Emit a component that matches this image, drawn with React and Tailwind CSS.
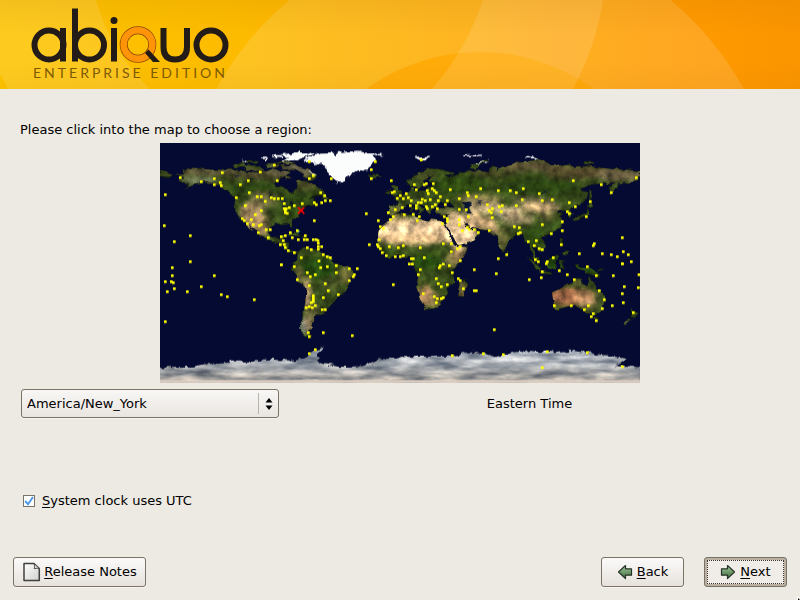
import React from "react";

// Outlines are longitude,latitude pairs; the map is a plain equirectangular one.
const toPoints = (s) =>
  s
    .trim()
    .split(/\s+/)
    .map((p) => {
      const [lon, lat] = p.split(",").map(Number);
      return (lon + 180) * 4 + "," + (90 - lat) * 4;
    })
    .join(" ");

const LAND = [
  // North America
  "-168,66 -162,66.5 -163,69 -156,71.3 -141,69.7 -128,70 -120,69.5 -115,68 -108,68 -100,68 -95,71 -90,69 -85,69 -82,68 -87,65 -93,62 -94.5,59 -92,57 -85,55.5 -82,53 -79,51.5 -79,55 -77,57 -78,60 -77,62.3 -70,61 -65,59 -62,57 -56,53 -58,51 -66,50 -70,47.5 -64,49 -65,46 -61,46 -66,43.7 -70,43.5 -70,41.7 -74,40.5 -76,37 -76,35 -81,32 -81,29 -80,26 -82,27 -83,29.5 -85,30 -90,29.3 -94,29.5 -97,28 -98,22 -96,19 -91,18.5 -90,21 -87,21.3 -88,16 -83,15 -84,11 -81,9 -77,8.5 -78,7 -81,7.5 -85,10 -88,13 -94,16 -97,15.8 -105,20 -106,23 -112,28.5 -114.5,31.5 -112,27 -110,23 -113,26 -117,32.5 -121,35 -124,40 -124,47 -123,49 -128,51 -131,55 -136,59 -145,60.5 -152,60 -155,58 -163,55 -158,58 -162,60 -166,62 -161,64",
  "-90,73 -80,73.5 -70,70.5 -62,66 -65,63 -70,62.5 -73,65 -73,68 -80,70 -88,70.5",
  "-117,73 -105,73 -102,69 -115,69.5",
  "-125,74 -117,75.5 -116,73 -123,71.5",
  "-95,76 -80,76.5 -80,74.5 -92,75",
  "-115,76.5 -106,76.5 -108,74.8 -115,75.2",
  "-101,74 -90,74 -92,72 -100,71.5",
  "-86,65.5 -81,64 -86,63",
  "-59,50.5 -56,51.5 -53,47 -59,47.7",
  "-85,22 -80,23 -74,20.3 -78,20.2",
  "-74,19.8 -69,19.3 -69,18.2 -74,18.2",
  // South America
  "-77,8 -72,12 -68,11 -62,10.5 -57,6 -51,4 -50,0 -44,-2.5 -39,-3 -35,-6 -35,-9 -39,-13 -39,-18 -41,-22 -48,-25.5 -49,-28.5 -54,-34 -58,-34 -57,-38 -62,-39 -65,-41 -64,-43 -67,-46 -66,-48 -69,-51 -68,-53 -65,-55 -70,-55.5 -75,-51 -75,-46 -73,-42 -73,-37 -71,-30 -70,-19 -76,-14 -79,-8 -81,-5 -80,-2 -80,1 -77,4",
  // Africa
  "-6,35.8 10,37.2 11,34 20,31 23,32.7 32,31 34,28 37,21 39,16 43,12 51,12 48,5 42,-2 39,-6 40.5,-11 40.5,-15 35,-20 35,-24 32.5,-27 30,-31 26,-34 19,-34.7 18,-32 15,-27 12,-18 13.5,-12 12,-5 9,-1 9.5,4 5,4.5 1,6 -8,4.5 -13,8 -17,13 -16.5,20 -16,24 -13,28 -9.5,31",
  "49.3,-12 50.3,-16 47,-25 44,-25 43.5,-21 44.5,-16",
  // Europe and Asia
  "-9,43.5 -1.5,43.5 -1,46 -4.5,48.5 1,50 4,52 8,54 8,57 10.5,57.7 10.5,55 11,54 19,54.5 21,57 24,57.5 23.5,59.3 30,60 22,60.3 21.5,63 25,65.5 22,66 17,62 19,60 16.5,57 14,55.5 11.5,59 8,58 5,59.5 5,62 12,66 18,69.5 25,71 31,70 41,67.5 40,66 33,66.5 37,64 40,65 44,66.5 44,68.5 54,68.5 60,69.5 68,68.5 67,71 70,73 73,71 72,68 76,72 80,73 87,75 98,76.5 104,77.7 113,74 127,73.5 130,71 140,72.5 150,71.5 160,70 170,70 180,69 180,65 177,64.5 179,62.5 170,60 163,60 163,57 160,53 157,51 156,57 163,61.5 155,59.5 143,59.3 135,54.7 141,53 140,48 135,43.5 130,42.5 127.5,39.5 129.5,36 126.5,34.5 126,37.5 125,39.7 121.5,39 122,40.7 118,39 119,37.5 122.5,37 119.5,35 122,31 121,28 117,23.5 110,21 106,20.5 106,18 109,14 109,11.5 105,8.7 101,13 99.5,12 100.5,8 104,2 101,3 98.5,8 98,16 94,16 92,22 88,21.8 82,17 80,13 78,8 76,10 73,17 72.5,21 70,21 67,24.7 61,25 57,26.5 54,26.5 50,30 48,30 51,25.5 54,24 56.5,26 57,24 60,22.5 55,17 45,12.7 43,14 39,21 35,28 35,32 36,36.5 30,36.2 27,37 26.5,40 30,41.2 36,41.5 41.5,41.5 38,45 35,46.5 36.5,45.2 33.5,44.5 31,46.5 28.5,44 28,41.5 23.5,40.5 24,38 22.5,36.5 19.5,40.5 19.5,42 14,45 13,45.5 12.5,44 18.5,40 16,38 12,42 9,44.4 4,43.5 3,42 0,39 -2,36.8 -5.5,36 -9,37",
  "-5.5,50 1.3,51.2 1.5,53 -2,55.5 -2,57.5 -3,58.6 -6,57.5 -4.5,54.8 -3,53.5 -5,52",
  "-10,52 -6.2,52.3 -6,55 -10,54",
  "-24,65.5 -16,66.3 -14,65 -19,63.5 -22.5,64",
  "130,31.5 131,34 136,35.5 139,38 141,41 141.8,39 140.5,35.5 136,34",
  "140,42 142,45.5 145,43.5 142,42.3",
  "142,54 143.5,54 143.5,49 142,46",
  "52,71 57,70.7 60,74 68,76.8 60,76 54,73",
  "137,76 146,75.5 142,73.5 138,74.5",
  "-180,69 -170,66 -175,64.5 -180,65",
  "80,9.7 82,7 80.5,6",
  "95,5.5 104,-2 106,-6 102,-4.5 98,1",
  "105,-6.2 114.5,-7.2 114,-8.7 106,-7.6",
  "109,1.5 113,3 117,7 119,5 117.5,1 116,-4 110.5,-3",
  "119.5,1 125,1.7 120.5,.3 123,-4.5 121,-3 119.5,-5.5",
  "120,18.5 122,18.5 122,14 124,12.5 120,14",
  "122,8 126,9.5 126,6 124,6",
  "120,25 122,25 121,22",
  "8.5,42 9.5,42 9.5,39 8.5,39",
  "12.5,38.2 15.5,38.2 15,36.8",
  "131,-.8 134,-1 135,-3.3 141,-2.6 146,-6 150.5,-10.5 146,-9 143,-9 138,-8 138,-5.5 133,-4",
  "148,-5.5 152,-4 151,-6",
  // Australia and New Zealand
  "114,-22 119,-20 124,-16.5 129,-15 132,-11.5 136.5,-12 135.5,-15 140.5,-17.5 142.5,-10.8 145.5,-15 149,-20.5 153,-25.5 153.5,-29 150,-37 146.5,-39 143.5,-38.7 138.5,-35.5 136,-34.7 131,-31.5 124,-33 118,-35 115,-34 115.5,-31.5",
  "144.5,-40.8 148.3,-40.8 147,-43.6",
  "173,-34.5 178.5,-37.8 175,-41.5 174,-39",
  "172.5,-40.7 174,-41.7 168,-46.5 166.5,-46",
].map(toPoints);

const ICE = [
  "-73,78 -66,80 -60,82 -45,82.5 -32,83.5 -20,82 -12,81.5 -20,80 -18,77 -20,74 -23,72 -25,70 -33,68 -40,65 -43,60 -48,61 -52,65 -54,69 -55,71 -60,75.5 -68,76",
  "-90,81.5 -75,83 -62,82.5 -70,80 -78,76.5 -88,77 -84,79",
  "-96,81 -90,81 -88,78.5 -95,79.3",
  "-104,79 -98,79 -99,77.8 -104,78",
  "-120,77 -114,77.6 -116,76.2",
  "11,79.7 22,80.3 20,78 16,77",
  "47,80.8 62,81.3 58,80 48,80",
  "94,80 100,80.5 104,78.8 96,79",
  "54,74 60,76.5 68,77 60,75.5",
].map(toPoints);

const ANTARCTICA = toPoints(
  "-180,-78.2 -155,-77.8 -148,-76 -126,-73.8 -104,-74 -102,-72.3 -80,-73 -70,-70 -62,-65 -57,-63.2 -61,-67 -61,-74 -60,-75 -45,-78 -28,-77.3 -10,-71 5,-70.5 40,-70 52,-66.8 62,-68 73,-70.3 86,-67 98,-65.2 115,-66.8 128,-65.5 140,-67.3 160,-70 170,-72 162,-76.5 180,-78.3 190,-79 190,-95 -190,-95 -190,-78.2"
);

const LAKES = [
  "-92,46.7 -88,48.5 -84.5,46.7 -88,46.8",
  "-88,42 -87,45 -85,45.5 -86.5,42",
  "-84,46 -80,45 -82,43.3",
  "-83,42 -79,43 -80,42",
  "-98,53.5 -96,51 -98,51",
  "-117,62 -110,62.8 -114,61",
  "-124,66.5 -119,66 -122,65",
  "47,45 52,47 53,44.5 51,41 54,37 50,37.3 49,41",
  "58,46 61,46 60,44",
  "32,0.3 34,0.3 33.5,-2.5 32,-2",
  "104,51.7 109,54.5 109.5,54 105,51.2",
].map(toPoints);

// Soft terrain patches: lon, lat, half width, half height, colour, opacity
const TERRAIN = [
  [-150, 69, 28, 4, "#5c5338", 0.9],
  [-150, 61, 14, 1.5, "#b9b4a4", 0.7],
  [-100, 67, 35, 4, "#554e31", 0.9],
  [-80, 71, 20, 5, "#655c48", 0.9],
  [-72, 59, 12, 4, "#463f22", 0.7],
  [-111, 36, 9, 10, "#a58760", 0.9],
  [-103, 47, 10, 6, "#83764c", 0.7],
  [-104, 28, 5, 9, "#a5875c", 0.9],
  [-112, 29, 3, 6, "#b59168", 0.8],
  [-90, 35, 9, 6, "#3e5220", 0.6],
  [-70, -24, 2.5, 13, "#c09a72", 1],
  [-76, -10, 2, 7, "#8c7848", 0.8],
  [-41, -9, 5, 7, "#6b6434", 0.8],
  [-52, -16, 7, 5, "#5b6630", 0.7],
  [-66, -36, 5, 6, "#6d6a3d", 0.9],
  [-69, -46, 4, 6, "#91795a", 0.9],
  [-73.5, -48, 1.5, 5, "#d3d5d2", 0.9],
  [5, 25, 32, 9, "#e9c696", 1],
  [22, 25, 18, 9, "#f0cc9d", 1],
  [-5, 24, 13, 9, "#efcd9d", 1],
  [10, 18, 27, 4, "#ecc28d", 1],
  [-3, 33, 9, 2, "#a68a5b", 0.9],
  [44, 7, 5, 6, "#b28c62", 0.9],
  [39, 2, 5, 5, "#8f7a4b", 0.8],
  [19, -25, 6, 8, "#b98c62", 1],
  [25, -28, 7, 5, "#967b4c", 0.7],
  [16, -16, 5, 4, "#586028", 0.6],
  [47, -22, 3, 8, "#826645", 0.8],
  [46, 24, 13, 13, "#edcb9d", 1],
  [40, 33, 5, 5, "#d9b78a", 1],
  [34, 39, 9, 2, "#7c7347", 0.9],
  [-4, 40, 5, 3, "#857a4a", 0.8],
  [13, 46.5, 5, 1, "#b1aa98", 0.5],
  [54, 32, 8, 6, "#c3a377", 1],
  [64, 30, 7, 5, "#bd9b70", 1],
  [62, 42, 14, 5, "#cbb183", 1],
  [60, 48, 16, 3, "#8e7f50", 0.9],
  [70, 26, 4, 4, "#c7a377", 0.9],
  [77, 18, 5, 8, "#7a7240", 0.7],
  [77, 35, 7, 2, "#c3baa8", 0.7],
  [83, 39, 9, 3, "#f0d0a0", 1],
  [88, 33, 13, 4, "#a39169", 1],
  [105, 42, 15, 4, "#c9a878", 1],
  [95, 47, 12, 2, "#8f805b", 0.8],
  [110, 35, 6, 3, "#7a6e41", 0.7],
  [18, 66, 9, 3, "#4d4a2a", 0.6],
  [100, 73, 24, 4, "#5d5335", 1],
  [140, 68, 32, 5, "#544b2c", 1],
  [165, 66, 18, 5, "#6e6046", 0.9],
  [70, 68, 18, 3, "#4c4a28", 0.8],
  [125, -25, 14, 7, "#9b6544", 1],
  [138, -26, 8, 6, "#b3825a", 1],
  [141, -30, 5, 3, "#bb9068", 0.9],
  [134, -14, 6, 2, "#6c6338", 0.7],
  [150, -26, 3, 9, "#4b552a", 0.8],
  [145, -37, 6, 2, "#404e25", 0.8],
  [169, -44, 3, 2, "#8f8b7a", 0.8],
];

const FOREST = [
  [-62, -4, 13, 8, "#1f450a", 0.85],
  [20, 1, 12, 5, "#264d0b", 0.85],
  [-8, 8, 8, 2, "#33520f", 0.8],
  [100, 20, 8, 8, "#26470d", 0.7],
  [112, 28, 9, 4, "#36521a", 0.7],
  [113, 0, 9, 6, "#224a0c", 0.8],
  [140, -5, 12, 4, "#224a0c", 0.8],
  [105, 57, 30, 6, "#243e0f", 0.8],
  [45, 58, 22, 7, "#2c4713", 0.8],
  [-110, 56, 20, 4, "#26400f", 0.8],
  [-75, 48, 14, 4, "#24400f", 0.8],
  [-83, 38, 7, 6, "#2c4c12", 0.8],
];

// City markers, measured on six 480-unit wide tiles of the map.
const CITIES = [
  [0, 0, "16,164 61,113 124,125 163,116 163,134 187,98 181,128 184,137 241,134 265,122 301,96 343,75 352,122 448,65 460,107 448,116 268,158 229,173 256,197 292,170 304,170 316,184 334,173 343,176 355,176 367,176 373,191 388,203 403,197 427,191 463,188 469,194 463,242 304,212 286,224 274,239 247,236 253,242 262,251 280,254 298,257 304,254 295,278 319,269 331,269 325,293 373,206 376,212 376,218 382,220 379,206 412,272 391,278 376,287 364,290 370,302 361,314 373,314 376,323 385,332 403,338 397,293 415,299 433,299 436,287 442,299 460,299 469,299 474,302 475,310 475,320 475,328 442,323 454,329 424,353 364,374 13,257 43,305 91,287 91,365"],
  [480, 0, "166,65 154,89 154,116 34,116 2,158 14,167 5,188 16,182 31,182 139,221 5,320 10,344 22,350 31,353 175,242 181,260 190,265 148,314 178,299 172,314 175,320 181,326 187,338 208,320 235,323 250,317 301,323 199,347 226,350 241,350 250,347 313,353 274,356 280,356 268,372 277,372 370,372 370,311 394,311 394,335 412,326 421,320 421,362 214,122 304,60 283,134 313,134 319,131 340,131 289,149 322,152 325,161 337,146 343,152 349,158 361,170 391,149 217,158 223,155 241,167 259,161 265,173 250,176 232,175 247,203 226,209 205,218 220,230 211,239 253,224 280,223 292,242 298,230 274,182 295,188 304,188 307,178 316,182 331,179 271,197 289,205 289,197 319,200 322,206 337,200 346,194 355,182 376,194 382,182 352,206 373,230 382,236 382,244 367,251 418,176 442,158 445,167 469,170 418,208 439,209 445,230 418,239 418,254 427,272 442,262 448,268 463,269 475,278"],
  [960, 0, "2,146 55,152 91,152 109,158 130,146 178,161 127,179 187,182 217,179 280,122 364,134 394,158 469,113 331,185 268,188 286,200 262,215 268,221 319,230 22,194 28,212 37,206 34,218 37,233 58,200 67,197 64,215 109,197 28,272 103,260 118,263 115,281 121,278 187,254 247,245 247,272 214,281 244,314 145,305 169,302 163,317 178,326 187,329 80,344 55,356 166,359 175,365 220,353 202,365 199,371 298,341 343,311 340,317 367,341 394,344 412,350 430,335 445,344 427,293 454,365 427,371"],
  [0, 360, "37,23 37,47 16,65 34,65 40,68 43,86 22,95 82,95 124,80 163,47 184,104 202,110 283,119 16,185 364,14 403,20 412,59 442,38 451,50 466,44 448,77 460,107 460,113 460,119 460,125 454,128 439,143 448,140 457,143 466,137 445,218 448,230 466,269 448,281 477,3"],
  [480, 360, "2,23 22,20 49,17 49,38 88,26 112,26 103,44 100,50 88,62 16,71 25,92 55,104 10,113 7,149 16,149 10,218 97,227 220,74 301,29 295,44 361,17 358,23 388,17 397,38 349,56 355,71 364,80 382,74 415,56 421,62 430,86 310,101 343,110 352,116 364,116 370,113 349,128 463,29 463,92 469,92 397,287"],
  [960, 360, "49,41 148,59 187,35 184,53 238,32 262,44 322,20 349,47 400,47 427,11 477,44 475,83 433,80 427,101 430,128 397,137 358,92 373,119 367,146 340,161 334,170 349,182 313,149 325,137 283,59 274,137 223,137 460,158 43,209 10,281 70,284 202,275 187,323 322,278 427,320"],
].flatMap(([dx, dy, s]) =>
  s.split(" ").map((p) => {
    const [x, y] = p.split(",").map(Number);
    return [x + dx, y + dy - 9];
  })
);

function Patches({ items }) {
  return items.map(([lon, lat, rx, ry, fill, opacity], i) => (
    <ellipse key={i} cx={(lon + 180) * 4} cy={(90 - lat) * 4} rx={rx * 4} ry={ry * 4} fill={fill} opacity={opacity} />
  ));
}

function WorldMap() {
  return (
    <svg viewBox="0 0 1440 720" className="mx-auto block w-[480px] max-w-full cursor-crosshair" role="img" aria-label="Time zone map">
      <defs>
        <filter id="relief" x="0" y="0" width="1440" height="720" filterUnits="userSpaceOnUse" colorInterpolationFilters="sRGB">
          <feTurbulence type="fractalNoise" baseFrequency="0.05" numOctaves="3" seed="4" result="coast" />
          <feDisplacementMap in="SourceGraphic" in2="coast" scale="14" xChannelSelector="R" yChannelSelector="G" result="land" />
          <feTurbulence type="fractalNoise" baseFrequency="0.035" numOctaves="5" seed="9" />
          <feColorMatrix values="1.3 0 0 0 -.15  1.3 0 0 0 -.15  1.3 0 0 0 -.15  0 0 0 0 1" result="grain" />
          <feComposite in="land" in2="grain" operator="arithmetic" k1="0.9" k2="0.57" k3="0" k4="0" />
        </filter>
        <filter id="snow" x="0" y="0" width="1440" height="720" filterUnits="userSpaceOnUse" colorInterpolationFilters="sRGB">
          <feTurbulence type="fractalNoise" baseFrequency="0.06" numOctaves="3" seed="4" result="coast" />
          <feDisplacementMap in="SourceGraphic" in2="coast" scale="20" xChannelSelector="R" yChannelSelector="G" />
        </filter>
        <filter id="ice" x="0" y="0" width="1440" height="720" filterUnits="userSpaceOnUse" colorInterpolationFilters="sRGB">
          <feTurbulence type="fractalNoise" baseFrequency="0.06" numOctaves="3" seed="7" result="coast" />
          <feDisplacementMap in="SourceGraphic" in2="coast" scale="20" xChannelSelector="R" yChannelSelector="G" result="land" />
          <feTurbulence type="fractalNoise" baseFrequency="0.01 0.05" numOctaves="5" seed="3" />
          <feColorMatrix values="1.6 0 0 0 -.32  1.45 0 0 0 -.23  1.25 0 0 0 -.1  0 0 0 0 1" result="grain" />
          <feComposite in="land" in2="grain" operator="arithmetic" k1="0.85" k2="0.56" k3="0" k4="0" />
        </filter>
        <filter id="soft" x="-20%" y="-20%" width="140%" height="140%">
          <feGaussianBlur stdDeviation="8" />
        </filter>
        <clipPath id="continents">
          {LAND.map((p, i) => (
            <polygon key={i} points={p} />
          ))}
        </clipPath>
        <linearGradient id="polar" x1="0" y1="0" x2="0" y2="1">
          <stop offset="0" stopColor="#c4c8ce" />
          <stop offset="0.45" stopColor="#a3a6a8" />
          <stop offset="0.75" stopColor="#aca69d" />
          <stop offset="0.85" stopColor="#cfc2b7" />
        </linearGradient>
      </defs>
      <rect width="1440" height="720" fill="#050a32" />
      <g filter="url(#relief)">
        <g clipPath="url(#continents)">
          <rect width="1440" height="720" fill="#37491b" />
          <g filter="url(#soft)">
            <Patches items={FOREST} />
            <Patches items={TERRAIN} />
          </g>
          {LAKES.map((p, i) => (
            <polygon key={i} points={p} fill="#0a1838" />
          ))}
        </g>
      </g>
      <polygon points={ANTARCTICA} fill="url(#polar)" filter="url(#ice)" />
      <g filter="url(#snow)">
        {ICE.map((p, i) => (
          <polygon key={i} points={p} fill="#fbfcfc" />
        ))}
        <path d="M455 50 L475 60 L462 70 Z M470 96 L440 86 L452 82 Z" fill="#d9dde2" />
      </g>
      <path d="M0 711 H1440 V720 H0 Z" fill="#d8cbc0" />
      <path d="M407 256 l14 8 l-8 8 z" fill="#178aa0" />
      {CITIES.map(([x, y], i) => (
        <rect key={i} x={x - 4} y={y - 4} width="8" height="8" fill="#ffff00" />
      ))}
      <path d="M414 193 L433 212 M433 193 L414 212" stroke="#ff0000" strokeWidth="5" />
    </svg>
  );
}

function Banner() {
  return (
    <header className="relative h-[89px] w-full overflow-hidden bg-[#ffa000]">
      <svg viewBox="0 0 800 89" preserveAspectRatio="none" className="block h-full w-full" aria-hidden="true">
        <defs>
          <linearGradient id="sun" x1="0" x2="1" y1="0" y2="0">
            <stop offset="0" stopColor="#fdc400" />
            <stop offset="0.3" stopColor="#fdbb00" />
            <stop offset="0.6" stopColor="#fea900" />
            <stop offset="0.85" stopColor="#ff9a00" />
            <stop offset="1" stopColor="#fb9500" />
          </linearGradient>
          <linearGradient id="shade" x1="0" x2="0" y1="0" y2="1">
            <stop offset="0" stopColor="#a06000" stopOpacity="0.1" />
            <stop offset="0.4" stopColor="#a06000" stopOpacity="0" />
            <stop offset="0.7" stopColor="#a06000" stopOpacity="0" />
            <stop offset="1" stopColor="#a06000" stopOpacity="0.06" />
          </linearGradient>
        </defs>
        <rect width="800" height="89" fill="url(#sun)" />
        <path d="M0 0 H96 Q110 50 150 89 H8 Q4 80 0 74 Z" fill="#fff" fillOpacity="0.12" />
        <circle cx="480" cy="232" r="300" fill="#fff" fillOpacity="0.13" />
        <circle cx="480" cy="245" r="193" fill="#ffa600" fillOpacity="0.7" />
        <path d="M483 0 H603 Q596 46 573 89 H432 Q466 50 483 0 Z" fill="#fff" fillOpacity="0.12" />
        <rect width="800" height="89" fill="url(#shade)" />
      </svg>
      <div className="absolute top-0 left-0 h-[89px] w-[240px]">
        <svg viewBox="0 0 240 89" className="block h-[89px] w-[240px]" role="img" aria-label="abiquo">
          <g fill="none" stroke="#231b17" strokeWidth="6">
            <circle cx="49" cy="45" r="14.5" />
            <circle cx="89.5" cy="45" r="14.5" />
            <circle cx="211" cy="45" r="14.5" />
            <line x1="63" y1="28" x2="63" y2="61.5" />
            <line x1="75" y1="8.5" x2="75" y2="61.5" />
            <line x1="114" y1="28" x2="114" y2="61.5" />
            <path d="M163.500 28 V47 Q163.500 59.500 175 59.500 Q187 59.500 187 47 V28" />
          </g>
          <circle cx="114" cy="20.5" r="3.500" fill="#231b17" />
          <circle cx="138" cy="44.5" r="14.300" fill="none" stroke="#8a4a05" strokeWidth="8" />
          <circle cx="138" cy="44.5" r="14.300" fill="none" stroke="#ff9408" strokeWidth="6.600" />
          <path d="M145 53 L148.500 49.500 L160 62 H153 Z" fill="#231b17" />
        </svg>
        <span className="absolute top-[64px] left-[33px] font-['Lato'] text-[14px] leading-[18px] tracking-[3px] whitespace-nowrap text-[#7d5a04]">
          ENTERPRISE EDITION
        </span>
      </div>
    </header>
  );
}

const buttonLook =
  "flex h-[30px] items-center justify-center rounded-[3px] border border-[#7b7367] bg-linear-to-b from-[#fbfaf9] via-[#f1eeeb] to-[#e6e1da] text-black shadow-[0_1px_0_#f7f5f1]";

function Arrow({ flip }) {
  return (
    <svg viewBox="0 0 16 16" className={flip ? "h-4 w-4 -scale-x-100" : "h-4 w-4"} aria-hidden="true">
      <defs>
        <linearGradient id={flip ? "leafL" : "leafR"} x1="0" x2="0" y1="0" y2="1">
          <stop offset="0" stopColor="#b4cfae" />
          <stop offset="0.5" stopColor="#709a6b" />
          <stop offset="1" stopColor="#3f6c3d" />
        </linearGradient>
      </defs>
      <path d="M1.500 4.800 H7.500 V1.500 L14.500 8 L7.500 14.500 V11.200 H1.500 Z" fill={flip ? "url(#leafL)" : "url(#leafR)"} stroke="#263427" strokeWidth="1.200" strokeLinejoin="round" />
    </svg>
  );
}

export default function App() {
  return (
    <div className="relative flex min-h-screen flex-col overflow-hidden bg-[#edeae3] font-['DejaVu_Sans',sans-serif] text-[13px] leading-5 text-black">
      <Banner />
      <main className="px-5 pt-[31px]">
        <p className="mb-[3px]">Please click into the map to choose a region:</p>
        <WorldMap />
        <div className="mt-1.5 flex items-center">
          <div className="relative ml-px w-[258px] shrink-0">
            <select
              aria-label="Time zone"
              className="block h-[29px] w-full appearance-none rounded-[3px] border border-[#7b7367] bg-linear-to-b from-[#f8f7f5] via-[#f1eeeb] to-[#e9e5df] pr-7 pl-[5px] shadow-[0_1px_0_#f7f5f1] outline-none"
            >
              <option>America/New_York</option>
            </select>
            <span className="pointer-events-none absolute inset-y-1 right-0 flex w-[21px] items-center justify-center border-l border-[#b8b2a8] pr-px">
              <svg viewBox="0 0 8 12" className="h-3 w-2" aria-hidden="true">
                <path d="M4 0 L7.500 4.500 H.5 Z M4 12 L7.500 7.500 H.5 Z" fill="#000" />
              </svg>
            </span>
          </div>
          <p className="flex-1 text-center">Eastern Time</p>
        </div>
        <label className="mt-[73px] flex w-fit items-center">
          <span className="relative mr-[7px] ml-[3px] h-3 w-3">
            <input type="checkbox" defaultChecked className="peer block h-3 w-3 appearance-none border border-[#7b7367] bg-white" />
            <svg viewBox="0 0 12 12" className="pointer-events-none absolute inset-0 hidden h-3 w-3 peer-checked:block" aria-hidden="true">
              <path d="M2.200 6 L5 9.200 L10 2" fill="none" stroke="#4a97e8" strokeWidth="1.900" />
            </svg>
          </span>
          <span>
            <u className="underline-offset-2">S</u>ystem clock uses UTC
          </span>
        </label>
      </main>
      <footer className="mt-auto flex items-center px-[13px] pb-[13px]">
        <button type="button" className={buttonLook + " w-[133px]"}>
          <svg viewBox="0 0 20 20" className="mr-0.5 h-5 w-5" aria-hidden="true">
            <defs>
              <linearGradient id="sheet" x1="0" x2="1" y1="0" y2="1">
                <stop offset="0" stopColor="#fff" />
                <stop offset="1" stopColor="#d0d0cc" />
              </linearGradient>
            </defs>
            <path d="M2 1.500 H12 L17.300 6.500 V18.500 H2 Z" fill="url(#sheet)" stroke="#3f403d" strokeWidth="1.500" strokeLinejoin="round" />
            <path d="M12 1.500 Q13.300 4.500 12.300 6.700 Q15 5.700 17.300 6.500 Z" fill="#f4f4f2" stroke="#4b4c48" strokeWidth="1" />
          </svg>
          <span>
            <u className="underline-offset-2">R</u>elease Notes
          </span>
        </button>
        <button type="button" className={buttonLook + " ml-auto w-[83px] gap-1"}>
          <Arrow flip />
          <span>
            <u className="underline-offset-2">B</u>ack
          </span>
        </button>
        <button type="button" className="ml-5 h-[30px] w-[83px] rounded-[3px] border border-[#7b7367] bg-[#b9b0a2] p-0.5 text-black">
          <span className="flex h-full items-center justify-center gap-1 border border-dotted border-[#3a342c] bg-[#f0ede9]">
            <Arrow />
            <span>
              <u className="underline-offset-2">N</u>ext
            </span>
          </span>
        </button>
      </footer>
      <svg viewBox="0 0 3 4" className="pointer-events-none absolute right-0 bottom-0 h-1 w-[3px]" aria-hidden="true">
        <path d="M0 0 L3 3 V4 H0 Z" fill="#fff" />
        <path d="M1 2 L3 4 H1 Z" fill="#000" />
      </svg>
    </div>
  );
}
